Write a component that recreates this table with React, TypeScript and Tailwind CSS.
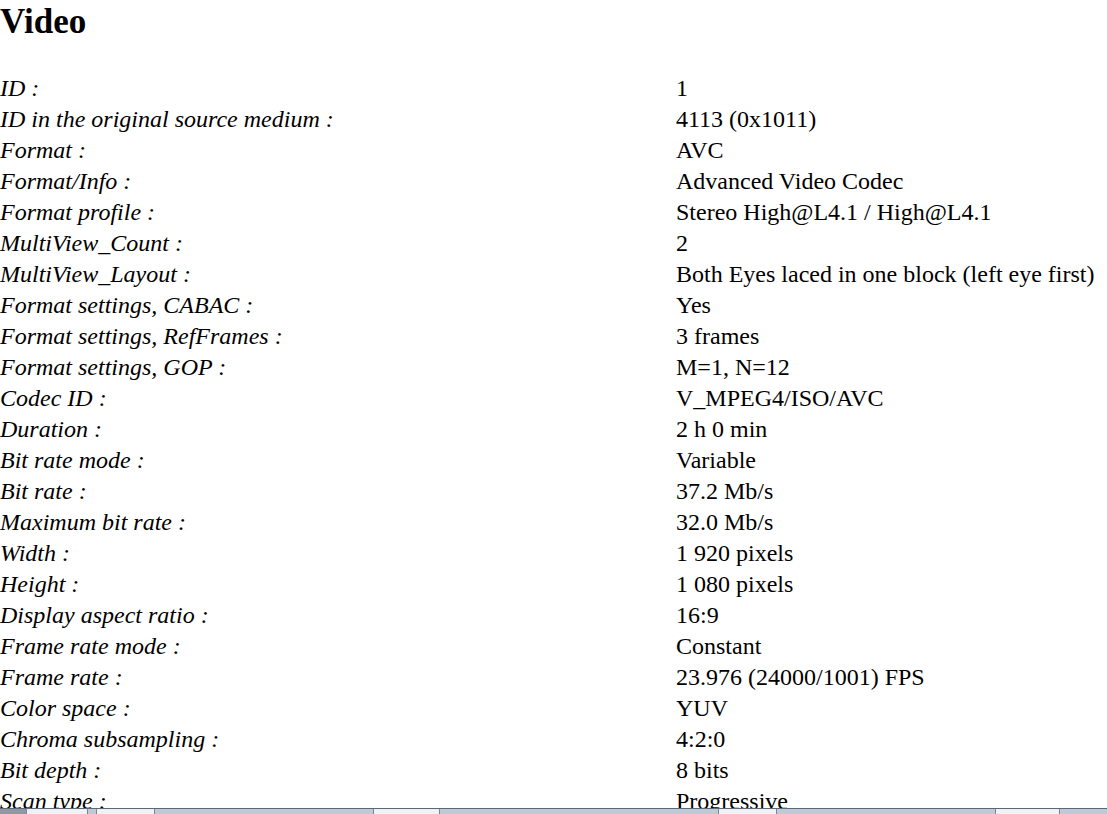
import React from 'react';

const rows: [string, string][] = [
  ['ID', '1'],
  ['ID in the original source medium', '4113 (0x1011)'],
  ['Format', 'AVC'],
  ['Format/Info', 'Advanced Video Codec'],
  ['Format profile', 'Stereo High@L4.1 / High@L4.1'],
  ['MultiView_Count', '2'],
  ['MultiView_Layout', 'Both Eyes laced in one block (left eye first)'],
  ['Format settings, CABAC', 'Yes'],
  ['Format settings, RefFrames', '3 frames'],
  ['Format settings, GOP', 'M=1, N=12'],
  ['Codec ID', 'V_MPEG4/ISO/AVC'],
  ['Duration', '2 h 0 min'],
  ['Bit rate mode', 'Variable'],
  ['Bit rate', '37.2 Mb/s'],
  ['Maximum bit rate', '32.0 Mb/s'],
  ['Width', '1 920 pixels'],
  ['Height', '1 080 pixels'],
  ['Display aspect ratio', '16:9'],
  ['Frame rate mode', 'Constant'],
  ['Frame rate', '23.976 (24000/1001) FPS'],
  ['Color space', 'YUV'],
  ['Chroma subsampling', '4:2:0'],
  ['Bit depth', '8 bits'],
  ['Scan type', 'Progressive'],
];

// bouts de la barre des tâches visibles en bas
const taskButtons = [
  { left: 'w-[26px]', btn: 'w-[62px]' },
  { left: 'w-[8px]', btn: 'w-[59px]' },
  { left: 'w-[218px]', btn: 'w-[67px]' },
  { left: 'w-[278px]', btn: 'w-[59px]' },
  { left: 'w-[218px]', btn: 'w-[65px]' },
];

export default function App() {
  return (
    <div className="h-[814px] w-full overflow-hidden flex flex-col bg-white text-black font-['Liberation_Serif','Times_New_Roman',serif]">
      <div className="flex-1 overflow-hidden">
        <h2 className="pt-[3px] text-[35px] leading-[38px] font-bold">Video</h2>
        <div className="mt-[32px] grid grid-cols-[676px_1fr] text-[24px] leading-[31px] whitespace-nowrap">
          {rows.map(([label, value]) => (
            <React.Fragment key={label}>
              <div className="italic">{label} :</div>
              <div>{value}</div>
            </React.Fragment>
          ))}
        </div>
      </div>
      <div className="h-[6px] shrink-0 flex items-stretch border-t border-[#5d6673] bg-[#bfcad9]">
        {taskButtons.map((b, i) => (
          <React.Fragment key={i}>
            <div className={`${b.left} ${i === 0 ? 'bg-[#8f99a6]' : ''}`} />
            <div className={`${b.btn} bg-[#eef1f5] border-x border-[#7d8794]`} />
          </React.Fragment>
        ))}
      </div>
    </div>
  );
}
